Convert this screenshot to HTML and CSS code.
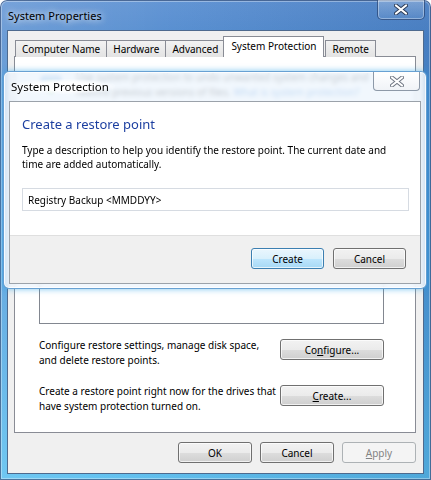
FILE: index.html
```html
<!DOCTYPE html>
<html lang="en">
<head>
    <meta charset="UTF-8">
    <title>System Properties</title>
    <link rel="stylesheet" href="styles.css">
</head>
<body>
    <div class="window">
        <div class="titlebar">
            <span class="title">System Properties</span>
            <button class="close-btn" aria-label="Close">
                <svg viewBox="0 0 14 11" width="14" height="11">
                    <path d="M2 1.5 L12 9.5 M12 1.5 L2 9.5" stroke="#2b3a55" stroke-width="4" stroke-linecap="round"/>
                    <path d="M2 1.5 L12 9.5 M12 1.5 L2 9.5" stroke="#ffffff" stroke-width="2.2" stroke-linecap="round"/>
                </svg>
            </button>
        </div>

        <div class="client">
            <div class="tabs">
                <div class="tab">Computer Name</div>
                <div class="tab">Hardware</div>
                <div class="tab">Advanced</div>
                <div class="tab active">System Protection</div>
                <div class="tab">Remote</div>
            </div>

            <div class="panel">
                <div class="intro">
                    <svg class="intro-icon" viewBox="0 0 24 24" width="24" height="24">
                        <rect x="2" y="4" width="20" height="14" rx="2" fill="#3f7fd0"/>
                        <rect x="4" y="6" width="16" height="10" fill="#8cc6f0"/>
                        <path d="M12 9 L19 13 L12 22 L5 13 Z" fill="#4aa84a"/>
                    </svg>
                    <p>Use system protection to undo unwanted system changes and restore previous versions of files. <span class="link">What is system protection?</span></p>
                </div>

                <div class="drives"></div>

                <div class="action-row">
                    <p>Configure restore settings, manage disk space, and delete restore points.</p>
                    <button class="btn wide">Co<u>n</u>figure...</button>
                </div>
                <div class="action-row">
                    <p>Create a restore point right now for the drives that have system protection turned on.</p>
                    <button class="btn wide"><u>C</u>reate...</button>
                </div>
            </div>

            <div class="buttons">
                <button class="btn">OK</button>
                <button class="btn">Cancel</button>
                <button class="btn" disabled><u>A</u>pply</button>
            </div>
        </div>

        <div class="dialog">
            <div class="dialog-titlebar">
                <span class="dialog-title">System Protection</span>
                <button class="dialog-close" aria-label="Close">
                    <svg viewBox="0 0 14 11" width="14" height="11">
                        <path d="M2 1.5 L12 9.5 M12 1.5 L2 9.5" stroke="#6d7480" stroke-width="4" stroke-linecap="round"/>
                        <path d="M2 1.5 L12 9.5 M12 1.5 L2 9.5" stroke="#ffffff" stroke-width="2.2" stroke-linecap="round"/>
                    </svg>
                </button>
            </div>
            <div class="dialog-client">
                <div class="dialog-body">
                    <h2>Create a restore point</h2>
                    <p>Type a description to help you identify the restore point. The current date and time are added automatically.</p>
                    <input type="text" class="field" value="Registry Backup <MMDDYY>">
                </div>
                <div class="dialog-footer">
                    <button class="btn default">Create</button>
                    <button class="btn">Cancel</button>
                </div>
            </div>
        </div>
    </div>
</body>
</html>
```

FILE: styles.css
```css
body {
    margin: 0;
    width: 431px;
    height: 480px;
    overflow: hidden;
    font-family: "Noto Sans", "Open Sans", sans-serif;
    font-size: 10px;
    color: #000;
}
p {
    margin: 0;
}
.window {
    position: relative;
    width: 431px;
    height: 480px;
    box-sizing: border-box;
    padding: 0 7px 6px 7px;
    border-radius: 7px 7px 0 0;
    background:
        linear-gradient(100deg, rgba(255, 255, 255, 0.18) 0%, rgba(255, 255, 255, 0.05) 35%, rgba(0, 30, 90, 0.15) 100%),
        linear-gradient(to bottom, #5a8fd2 0%, #4d88cd 40px, #4f9cdc 55%, #5cc0f0 100%);
    box-shadow: inset 0 0 0 1px rgba(20, 50, 100, 0.6), inset 0 0 0 2px rgba(255, 255, 255, 0.35);
}
.titlebar {
    display: flex;
    justify-content: space-between;
    align-items: flex-start;
    height: 30px;
}
.title {
    margin: 8px 0 0 1px;
    font-size: 11px;
    text-shadow: 0 0 6px rgba(255, 255, 255, 0.9), 0 0 10px rgba(255, 255, 255, 0.6);
}
.close-btn {
    width: 48px;
    height: 20px;
    margin-right: -1px;
    padding: 0;
    border: 1px solid rgba(30, 60, 110, 0.7);
    border-top: none;
    border-radius: 0 0 5px 5px;
    background: linear-gradient(to bottom, rgba(255, 255, 255, 0.25), rgba(255, 255, 255, 0.05));
    box-shadow: inset 0 0 0 1px rgba(255, 255, 255, 0.35);
    display: flex;
    align-items: center;
    justify-content: center;
}
.client {
    height: 444px;
    box-sizing: border-box;
    border: 1px solid #4e6a8e;
    background: #f0f0f0;
    padding: 5px 7px 0 6px;
}
.tabs {
    display: flex;
    align-items: flex-end;
    height: 21px;
    padding-left: 1px;
}
.tab {
    height: 16px;
    line-height: 16px;
    padding: 0 6px;
    margin-right: -1px;
    border: 1px solid #898c95;
    border-bottom: none;
    background: linear-gradient(to bottom, #f2f2f2, #e3e3e3);
}
.tab.active {
    position: relative;
    z-index: 1;
    height: 20px;
    line-height: 19px;
    padding: 0 7px;
    margin: 0 1px 0 -1px;
    background: #fff;
}
.panel {
    height: 377px;
    box-sizing: border-box;
    margin-top: -1px;
    border: 1px solid #898c95;
    background: #fff;
    padding: 13px 31px 0 24px;
}
.intro {
    display: flex;
    gap: 13px;
    line-height: 15px;
}
.intro-icon {
    flex: none;
    margin-top: 2px;
}
.link {
    color: #0066cc;
}
.drives {
    height: 110px;
    margin-top: 112px;
    border: 1px solid #828790;
}
.action-row {
    display: flex;
    justify-content: space-between;
    align-items: flex-start;
    margin-top: 15px;
    line-height: 14.5px;
}
.action-row + .action-row {
    margin-top: 18px;
}
.action-row p {
    width: 240px;
    margin-top: -1px;
}
.buttons {
    display: flex;
    justify-content: flex-end;
    gap: 8px;
    margin-top: 9px;
}
.btn {
    width: 74px;
    height: 21px;
    padding: 0;
    border: 1px solid #707070;
    border-radius: 3px;
    background: linear-gradient(to bottom, #f2f2f2 0%, #ebebeb 50%, #dddddd 51%, #cfcfcf 100%);
    box-shadow: inset 0 0 0 1px rgba(255, 255, 255, 0.7);
    font-family: inherit;
    font-size: 10px;
    color: #000;
}
.btn.wide {
    width: 104px;
}
.btn.default {
    border-color: #3c7fb1;
    background: linear-gradient(to bottom, #eaf6fd 0%, #d9f0fc 50%, #bee6fd 51%, #a7d9f5 100%);
}
.btn:disabled {
    border-color: #adb2b5;
    background: #f4f4f4;
    box-shadow: none;
    color: #838383;
}
.dialog {
    position: absolute;
    top: 71px;
    left: 3px;
    width: 424px;
    height: 218px;
    box-sizing: border-box;
    padding: 0 5px 5px 5px;
    border: 1px solid rgba(70, 140, 200, 0.8);
    border-radius: 6px;
    background: rgba(238, 245, 252, 0.82);
    backdrop-filter: blur(2px);
    box-shadow: 0 0 6px rgba(40, 160, 230, 0.6), inset 0 0 0 1px rgba(255, 255, 255, 0.8);
}
.dialog-titlebar {
    display: flex;
    justify-content: space-between;
    align-items: flex-start;
    height: 29px;
}
.dialog-title {
    margin: 7px 0 0 2px;
    padding: 0 6px 0 0;
    font-size: 11.5px;
    background: radial-gradient(ellipse at center, rgba(255, 255, 255, 0.95) 40%, rgba(255, 255, 255, 0) 75%);
    text-shadow: 0 0 6px #fff;
}
.dialog-close {
    width: 47px;
    height: 19px;
    margin-right: 1px;
    padding: 0;
    border: 1px solid #8d99a8;
    border-top: none;
    border-radius: 0 0 4px 4px;
    background: linear-gradient(to bottom, #ffffff, #f0f3f7);
    display: flex;
    align-items: center;
    justify-content: center;
}
.dialog-client {
    height: 183px;
    box-sizing: border-box;
    border: 1px solid #9ba2aa;
    display: flex;
    flex-direction: column;
}
.dialog-body {
    height: 134px;
    box-sizing: border-box;
    background: #fff;
    padding: 12px 11px 0 12px;
    border-bottom: 1px solid #dfdfdf;
}
.dialog-body h2 {
    margin: 0;
    font-size: 13px;
    font-weight: normal;
    line-height: 20px;
    color: #1c3fa0;
}
.dialog-body p {
    margin-top: 9px;
    line-height: 14px;
}
.field {
    display: block;
    width: 100%;
    height: 23px;
    box-sizing: border-box;
    margin-top: 17px;
    padding: 0 5px;
    border: 1px solid #d6dbe2;
    font-family: inherit;
    font-size: 10px;
    color: #000;
}
.dialog-footer {
    flex: 1;
    display: flex;
    justify-content: flex-end;
    align-items: flex-start;
    gap: 9px;
    padding: 12px 14px 0 0;
    background: #f0f0f0;
}
.dialog-footer .btn {
    width: 73px;
}
```
